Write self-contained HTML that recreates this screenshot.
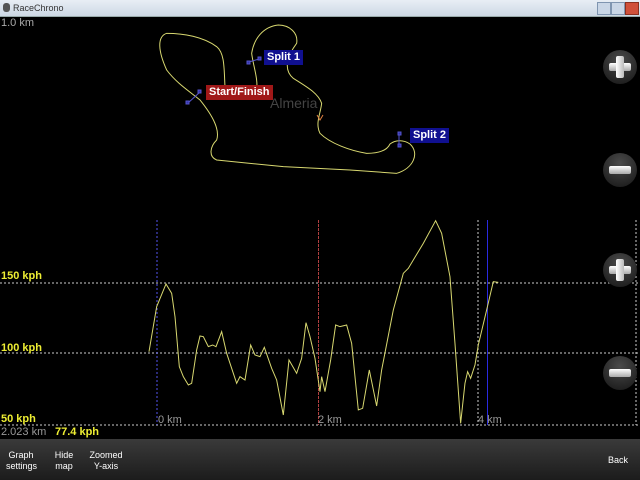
<!DOCTYPE html>
<html><head><style>
body{margin:0;width:640px;height:480px;background:#000;overflow:hidden;position:relative;font-family:"Liberation Sans",sans-serif}
.t{position:absolute;white-space:nowrap}
#title{position:absolute;left:0;top:0;width:640px;height:16px;background:linear-gradient(#e8eef5,#cdd8e4);border-bottom:1px solid #9aa;font-size:9px;color:#333}
#bar{position:absolute;left:0;top:439px;width:640px;height:41px;background:linear-gradient(#3a3a3a,#1c1c1c)}
.b{position:absolute;color:#fff;font-size:9px;text-align:center;line-height:11px;top:450px}
.lbl{position:absolute;color:#fff;font-size:11px;font-weight:bold;padding:1px 3px;line-height:13px}
.btn{position:absolute;left:603px;width:34px;height:34px;border-radius:50%;background:radial-gradient(circle at 50% 30%,#4a4a4a,#151515)}
.h{position:absolute;left:6px;top:13px;width:22px;height:8px;background:linear-gradient(#fff,#aaa);border-radius:2px}
.v{position:absolute;left:13px;top:6px;width:8px;height:22px;background:linear-gradient(90deg,#fff,#bbb);border-radius:2px}
</style></head><body>
<div id="title"><span style="position:absolute;left:3px;top:3px;width:7px;height:9px;background:#555;border-radius:3px"></span><span class="t" style="left:13px;top:3px">RaceChrono</span>
<span style="position:absolute;left:597px;top:2px;width:12px;height:11px;background:#c9d6e6;border:1px solid #7f95b0"></span>
<span style="position:absolute;left:611px;top:2px;width:12px;height:11px;background:#c9d6e6;border:1px solid #7f95b0"></span>
<span style="position:absolute;left:625px;top:2px;width:12px;height:11px;background:#d0503a;border:1px solid #8a3020"></span></div>
<div class="t" style="left:1px;top:17px;color:#aaa;font-size:11px">1.0 km</div>

<svg width="640" height="480" style="position:absolute;left:0;top:0">
<g transform="translate(150,20) scale(0.3333)" fill="none" stroke="#d8d870" stroke-width="3">
<path d="M150,240 C190,290 210,330 200,360 C180,380 175,410 200,420 L400,440 L600,450 L740,460 C790,445 810,400 780,372 C760,358 735,360 720,372 C712,390 690,400 650,400 C600,392 540,370 510,340 C495,310 512,280 515,250 C505,220 470,200 430,175 C400,150 410,110 440,70 C445,40 420,15 385,15 C340,20 312,55 305,100 C310,140 325,175 320,215 L225,200 C222,150 225,100 200,80 C160,50 100,40 50,40 C20,50 25,95 50,150 C80,190 120,215 150,240 Z"/>
</g>
<g stroke="#5555cc" stroke-width="1" fill="#3333aa"><line x1="188" y1="103" x2="200" y2="92"/><rect x="186" y="101" width="3" height="3"/><rect x="198" y="90" width="3" height="3"/>
<line x1="249" y1="62" x2="259" y2="59"/><rect x="247" y="61" width="3" height="3"/><rect x="258" y="57" width="3" height="3"/>
<line x1="399" y1="133" x2="399" y2="145"/><rect x="398" y="132" width="3" height="3"/><rect x="398" y="144" width="3" height="3"/></g>
<path d="M317,115 L320,120 L323,115" stroke="#e08040" fill="none"/>
<g stroke="#ccc" stroke-width="1" stroke-dasharray="2,2"><line x1="0" y1="283" x2="640" y2="283"/><line x1="0" y1="353" x2="640" y2="353"/><line x1="0" y1="425" x2="640" y2="425"/>
<line x1="478" y1="220" x2="478" y2="425"/><line x1="636" y1="220" x2="636" y2="425"/></g>
<line x1="157" y1="220" x2="157" y2="425" stroke="#5555ee" stroke-dasharray="2,2"/>
<line x1="318.5" y1="220" x2="318.5" y2="425" stroke="#b04040" stroke-dasharray="3,1"/>
<line x1="487.5" y1="220" x2="487.5" y2="425" stroke="#2a2ae0"/>
<g transform="translate(140,210) scale(0.3333)"><polyline fill="none" stroke="#d8d870" stroke-width="3" points="27,425 50,290 78,222 95,250 105,320 118,470 130,500 145,525 155,520 170,420 180,378 190,380 205,410 218,405 228,410 245,365 260,430 290,520 300,500 315,510 332,405 345,435 360,440 373,412 395,475 410,510 430,615 447,450 470,490 485,445 498,338 510,380 525,445 540,545 545,500 555,545 572,450 587,345 600,350 620,345 635,400 655,600 668,595 688,480 710,588 725,480 760,300 790,190 805,175 850,100 887,32 905,70 930,200 945,400 962,640 975,520 983,485 992,505 1005,465 1015,405 1040,300 1060,215 1075,217"/></g>
</svg>

<div class="lbl" style="left:206px;top:85px;background:#a01818">Start/Finish</div>
<div class="lbl" style="left:264px;top:50px;background:#101090">Split 1</div>
<div class="lbl" style="left:410px;top:128px;background:#101090">Split 2</div>
<div class="t" style="left:270px;top:95px;color:#444;font-size:14px">Almeria</div>

<div class="t" style="left:1px;top:270px;color:#ee3;font-size:11px;font-weight:bold">150 kph</div>
<div class="t" style="left:1px;top:342px;color:#ee3;font-size:11px;font-weight:bold">100 kph</div>
<div class="t" style="left:1px;top:413px;color:#ee3;font-size:11px;font-weight:bold">50 kph</div>
<div class="t" style="left:158px;top:414px;color:#999;font-size:11px">0 km</div>
<div class="t" style="left:318px;top:414px;color:#999;font-size:11px">2 km</div>
<div class="t" style="left:478px;top:414px;color:#999;font-size:11px">4 km</div>
<div class="t" style="left:1px;top:426px;color:#999;font-size:11px">2.023 km</div>
<div class="t" style="left:55px;top:426px;color:#ee3;font-size:11px;font-weight:bold">77.4 kph</div>

<div class="btn" style="top:50px"><div class="h"></div><div class="v"></div></div>
<div class="btn" style="top:153px"><div class="h"></div></div>
<div class="btn" style="top:253px"><div class="h"></div><div class="v"></div></div>
<div class="btn" style="top:356px"><div class="h"></div></div>

<div id="bar"></div>
<div class="b" style="left:6px;width:30px">Graph<br>settings</div>
<div class="b" style="left:50px;width:28px">Hide<br>map</div>
<div class="b" style="left:88px;width:36px">Zoomed<br>Y-axis</div>
<div class="b" style="left:604px;top:455px;width:28px">Back</div>
</body></html>
